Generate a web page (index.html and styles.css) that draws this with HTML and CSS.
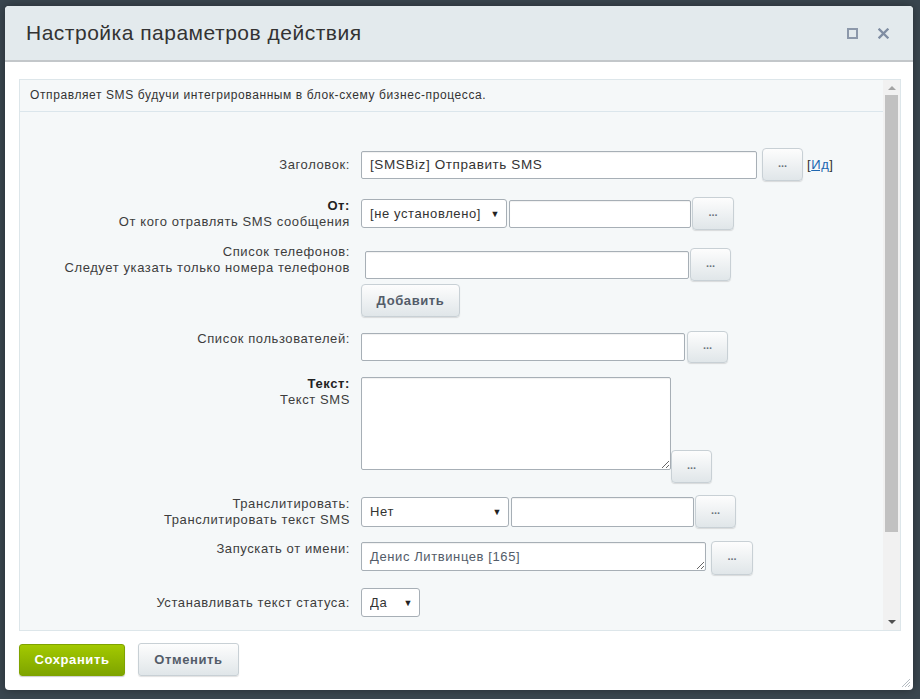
FILE: index.html
```html
<!DOCTYPE html>
<html lang="ru">

<head>
    <meta charset="UTF-8">
    <meta name="viewport" content="width=device-width, initial-scale=1.0">
    <title>Настройка параметров действия</title>
    <link rel="stylesheet" href="styles.css">
</head>

<body>

    <div class="dialog">
        <div class="dialog-head">
            <span class="dialog-title">Настройка параметров действия</span>
            <span class="head-icons">
                <svg class="ico" width="11" height="11" viewBox="0 0 11 11"><rect x="1" y="1" width="9" height="9" fill="none" stroke="#8c98aa" stroke-width="2"/></svg>
                <svg class="ico" width="11" height="11" viewBox="0 0 11 11"><path d="M1.5 1.5 L9.5 9.5 M9.5 1.5 L1.5 9.5" stroke="#7f8da2" stroke-width="2.3" stroke-linecap="square"/></svg>
            </span>
        </div>

        <div class="dialog-body">
            <div class="panel">
                <div class="panel-main">
                    <div class="panel-desc">Отправляет SMS будучи интегрированным в блок-схему бизнес-процесса.</div>

                    <div class="form">
                        <div class="row row-title">
                            <div class="label">Заголовок:</div>
                            <div class="field">
                                <input class="input title-input" type="text" value="[SMSBiz] Отправить SMS">
                                <button class="dots">...</button>
                                <span class="id-link">[<a href="#">Ид</a>]</span>
                            </div>
                        </div>

                        <div class="row row-from">
                            <div class="label"><b>От:</b><br>От кого отравлять SMS сообщения</div>
                            <div class="field">
                                <span class="select from-select"><select><option>[не установлено]</option></select></span>
                                <input class="input from-input" type="text">
                                <button class="dots">...</button>
                            </div>
                        </div>

                        <div class="row row-phones">
                            <div class="label">Список телефонов:<br>Следует указать только номера телефонов</div>
                            <div class="field field-stack">
                                <div class="field-line">
                                    <input class="input phones-input" type="text">
                                    <button class="dots">...</button>
                                </div>
                                <button class="btn-add">Добавить</button>
                            </div>
                        </div>

                        <div class="row row-users">
                            <div class="label">Список пользователей:</div>
                            <div class="field">
                                <input class="input users-input" type="text">
                                <button class="dots">...</button>
                            </div>
                        </div>

                        <div class="row row-text">
                            <div class="label"><b>Текст:</b><br>Текст SMS</div>
                            <div class="field">
                                <textarea class="input sms-text"></textarea>
                                <button class="dots">...</button>
                            </div>
                        </div>

                        <div class="row row-translit">
                            <div class="label">Транслитировать:<br>Транслитировать текст SMS</div>
                            <div class="field">
                                <span class="select translit-select"><select><option>Нет</option></select></span>
                                <input class="input translit-input" type="text">
                                <button class="dots">...</button>
                            </div>
                        </div>

                        <div class="row row-runas">
                            <div class="label">Запускать от имени:</div>
                            <div class="field">
                                <textarea class="input runas-text">Денис Литвинцев [165]</textarea>
                                <button class="dots">...</button>
                            </div>
                        </div>

                        <div class="row row-status">
                            <div class="label">Устанавливать текст статуса:</div>
                            <div class="field">
                                <span class="select status-select"><select><option>Да</option></select></span>
                            </div>
                        </div>
                    </div>
                </div>

                <div class="scrollbar">
                    <span class="arrow arrow-up"></span>
                    <span class="thumb"></span>
                    <span class="arrow arrow-down"></span>
                </div>
            </div>

            <div class="dialog-foot">
                <button class="btn btn-save">Сохранить</button>
                <button class="btn btn-cancel">Отменить</button>
            </div>
        </div>

        <svg class="grip" width="10" height="10" viewBox="0 0 10 10"><path d="M9 1 L1 9 M9 4 L4 9 M9 7 L7 9" stroke="#b5bcc2" stroke-width="1"/></svg>
    </div>

</body>

</html>
```

FILE: styles.css
```css
body {
    margin: 0;
    padding: 6px 0 0 5px;
    height: 699px;
    box-sizing: border-box;
    overflow: hidden;
    background-color: #3a464f;
    font-family: "Liberation Sans", Arial, sans-serif;
    font-size: 13px;
    letter-spacing: 0.6px;
    color: #333;
}

input,
textarea,
select,
button {
    letter-spacing: inherit;
}

.dialog {
    position: relative;
    width: 908px;
    height: 684px;
    background-color: #fff;
    border-radius: 4px;
    box-shadow: 0 0 10px rgba(0, 0, 0, 0.35);
    overflow: hidden;
}

.dialog-head {
    display: flex;
    justify-content: space-between;
    align-items: center;
    height: 54px;
    padding: 0 24px 0 21px;
    background-color: #e3eaed;
    border-bottom: 2px solid #c3c7ca;
}

.dialog-title {
    font-size: 21px;
    letter-spacing: 0.5px;
    color: #333;
}

.head-icons {
    display: flex;
    gap: 20px;
    padding-top: 1px;
}

.dialog-body {
    padding: 17px 12px 0 14px;
}

.panel {
    display: flex;
    height: 552px;
    box-sizing: border-box;
    border: 1px solid #dde6ea;
    background-color: #f5f8f9;
}

.panel-main {
    flex: 1;
    overflow: hidden;
}

.panel-desc {
    height: 31px;
    line-height: 31px;
    padding-left: 10px;
    border-bottom: 1px solid #dbe6ec;
    font-size: 12px;
    color: #333;
}

.form {
    padding-top: 36px;
}

.row {
    display: flex;
    align-items: center;
}

.label {
    flex: none;
    width: 341px;
    box-sizing: border-box;
    padding-right: 11px;
    text-align: right;
    line-height: 16px;
    color: #3d3d3d;
}

.label b {
    color: #222;
}

.field {
    display: flex;
    align-items: center;
}

.input {
    box-sizing: border-box;
    height: 28px;
    padding: 0 8px;
    border: 1px solid #a7afb6;
    border-radius: 2px;
    background-color: #fff;
    box-shadow: inset 0 1px 1px rgba(0, 0, 0, 0.06);
    font-family: inherit;
    font-size: 13px;
    color: #333;
    outline: none;
}

textarea.input {
    padding: 6px 8px;
    resize: both;
}

.dots {
    box-sizing: border-box;
    width: 41px;
    height: 33px;
    padding: 0 0 4px;
    border: 1px solid #c8d0d5;
    border-radius: 4px;
    background: linear-gradient(#fdfdfd, #e0e6e9);
    box-shadow: 0 1px 1px rgba(0, 0, 0, 0.12);
    font-family: inherit;
    font-size: 11px;
    font-weight: bold;
    letter-spacing: 0;
    color: #6a737d;
}

.select {
    position: relative;
    display: inline-block;
}

.select select {
    appearance: none;
    box-sizing: border-box;
    width: 100%;
    height: 100%;
    padding: 0 8px;
    border: 1px solid #a7afb6;
    border-radius: 3px;
    background-color: #fff;
    font-family: inherit;
    font-size: 13px;
    color: #333;
}

.select::after {
    content: "▼";
    position: absolute;
    right: 7px;
    top: 50%;
    transform: translateY(-50%);
    font-size: 9px;
    color: #222;
    pointer-events: none;
}

.id-link {
    margin-left: 4px;
    color: #333;
}

.id-link a {
    color: #2067b0;
}

/* rows */

.title-input {
    width: 396px;
    margin-right: 5px;
    font-size: 13.5px;
}

.row-from {
    margin-top: 16px;
}

.from-select {
    width: 146px;
    height: 29px;
}

.from-input {
    width: 182px;
    margin-left: 2px;
    margin-right: 1px;
}

.row-from .dots {
    width: 42px;
}

.row-phones {
    align-items: flex-start;
    margin-top: 14px;
}

.field-stack {
    flex-direction: column;
    align-items: flex-start;
    margin-top: 4px;
}

.field-line {
    display: flex;
    align-items: center;
}

.phones-input {
    width: 324px;
    margin-left: 4px;
    margin-right: 1px;
}

.btn-add {
    box-sizing: border-box;
    width: 99px;
    height: 33px;
    margin-top: 3px;
    border: 1px solid #c8d0d5;
    border-radius: 4px;
    background: linear-gradient(#fdfdfd, #e0e6e9);
    box-shadow: 0 1px 1px rgba(0, 0, 0, 0.12);
    font-family: inherit;
    font-size: 13px;
    font-weight: bold;
    color: #535c69;
}

.row-users {
    align-items: flex-start;
    margin-top: 14px;
}

.users-input {
    width: 324px;
    margin-right: 2px;
}

.row-users .dots {
    height: 32px;
}

.row-text {
    align-items: flex-start;
    margin-top: 13px;
}

.row-text .field {
    align-items: flex-start;
    margin-top: 1px;
}

.sms-text {
    width: 310px;
    height: 93px;
}

.row-text .dots {
    margin-top: 73px;
}

.row-translit {
    margin-top: 12px;
}

.translit-select {
    width: 148px;
    height: 30px;
}

.translit-input {
    width: 183px;
    height: 30px;
    margin-left: 2px;
    margin-right: 1px;
}

.row-runas {
    align-items: flex-start;
    margin-top: 13px;
}

.row-runas .field {
    align-items: flex-start;
}

.runas-text {
    width: 345px;
    height: 29px;
    margin-top: 1px;
    margin-right: 5px;
    padding-top: 6px;
    color: #535c69;
    overflow: hidden;
}

.row-runas .dots {
    width: 42px;
    height: 34px;
}

.row-status {
    margin-top: 13px;
}

.status-select {
    width: 59px;
    height: 29px;
}

/* fake scrollbar */

.scrollbar {
    display: flex;
    flex-direction: column;
    align-items: center;
    width: 17px;
    background-color: #f1f1f1;
}

.thumb {
    width: 13px;
    height: 437px;
    margin-top: 5px;
    background-color: #c1c1c1;
}

.arrow {
    width: 0;
    height: 0;
    border-left: 4px solid transparent;
    border-right: 4px solid transparent;
}

.arrow-up {
    margin-top: 6px;
    border-bottom: 4px solid #a3a3a3;
}

.arrow-down {
    margin-top: auto;
    margin-bottom: 6px;
    border-top: 4px solid #505050;
}

/* footer */

.dialog-foot {
    display: flex;
    align-items: center;
    gap: 13px;
    margin-top: 12px;
}

.btn {
    box-sizing: border-box;
    height: 33px;
    border-radius: 3px;
    font-family: inherit;
    font-size: 13px;
    font-weight: bold;
}

.btn-save {
    width: 106px;
    height: 32px;
    border: 1px solid #7fa300;
    background: linear-gradient(#a3c900, #7ea400);
    box-shadow: 0 1px 1px rgba(0, 0, 0, 0.2);
    color: #fff;
}

.btn-cancel {
    width: 101px;
    border: 1px solid #c8d0d5;
    background: linear-gradient(#fdfdfd, #e0e6e9);
    box-shadow: 0 1px 1px rgba(0, 0, 0, 0.12);
    color: #535c69;
}

.grip {
    position: absolute;
    right: 2px;
    bottom: 2px;
}
```
